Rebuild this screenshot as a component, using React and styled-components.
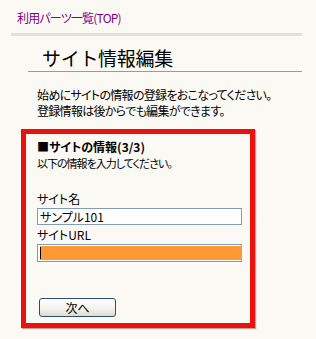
import React from "react";
import styled, { createGlobalStyle } from "styled-components";

const Global = createGlobalStyle`
  html, body { margin: 0; padding: 0; background: #fbf9f3; }
  body {
    font-family: "Noto Sans CJK JP", "Noto Sans", sans-serif;
    font-size: 12px;
    color: #000;
  }
`;

const Page = styled.div`
  width: 316px;
  height: 339px;
  padding-top: 10px;
  box-sizing: border-box;
  overflow: hidden;
`;

const TopLink = styled.a`
  display: block;
  margin-left: 17px;
  font-size: 12px;
  line-height: 16px;
  letter-spacing: -0.8px;
  color: #800080;
  text-decoration: none;
  font-feature-settings: "palt";
`;

const TopRule = styled.div`
  margin: 7px 14px 0 11px;
  height: 3px;
  background: #e2e0da;
`;

const TitleBar = styled.div`
  margin: 10px 14px 0 28px;
  border-bottom: 1px solid #9c9a94;
  padding: 0 0 1px 14px;
`;

const Title = styled.h1`
  margin: 0;
  font-size: 19px;
  line-height: 24px;
  font-weight: normal;
  letter-spacing: -0.3px;
`;

const Intro = styled.p`
  margin: 15px 0 0 37px;
  font-size: 12px;
  line-height: 16px;
  letter-spacing: -0.7px;
  font-feature-settings: "palt";
`;

const FormBox = styled.div`
  margin: 10px 0 0 21px;
  width: 234px;
  height: 199px;
  box-sizing: border-box;
  border: 5px solid #e8120f;
  box-shadow: 1px 1px 1px rgba(90, 0, 0, 0.35);
  padding: 4px 0 0 11px;
  display: flex;
  flex-direction: column;
  font-feature-settings: "palt";
`;

const BoxHeading = styled.div`
  font-weight: bold;
  line-height: 18px;
`;

const Line = styled.div`
  line-height: 15px;
  font-size: ${(p) => p.$size || 12}px;
  letter-spacing: ${(p) => p.$ls || 0}px;
  margin-top: ${(p) => p.$gap || 0}px;
`;

const Field = styled.div`
  margin-top: 2px;
  width: 205px;
  height: ${(p) => p.$h}px;
  box-sizing: border-box;
  border: 1px solid #7f9db9;
  background: #fff;
  padding: 0 2px;
  line-height: ${(p) => p.$h - 2}px;
  font-size: 12px;
  display: flex;
  align-items: center;
`;

const Selected = styled.div`
  position: relative;
  flex: 1;
  height: 14px;
  margin-right: -3px;
  background: #ff9933;
`;

const Caret = styled.span`
  position: absolute;
  left: 0;
  top: 1px;
  width: 1px;
  height: 12px;
  background: #000;
`;

const NextButton = styled.button`
  margin: 36px 0 0 2px;
  width: 77px;
  height: 19px;
  padding: 0;
  border: 1px solid #2b4e75;
  border-radius: 3px;
  background: linear-gradient(#ffffff, #f3f1ea 60%, #dedbce);
  font-family: inherit;
  font-size: 12px;
  line-height: 17px;
  color: #000;
`;

export default function App() {
  return (
    <>
      <Global />
      <Page>
        <TopLink href="#">利用パーツ一覧(TOP)</TopLink>
        <TopRule />
        <TitleBar>
          <Title>サイト情報編集</Title>
        </TitleBar>
        <Intro>
          始めにサイトの情報の登録をおこなってください。
          <br />
          登録情報は後からでも編集ができます。
        </Intro>
        <FormBox>
          <BoxHeading>■サイトの情報(3/3)</BoxHeading>
          <Line $size={11} $ls={-1}>以下の情報を入力してください。</Line>
          <Line $gap={20}>サイト名</Line>
          <Field $h={17}>サンプル101</Field>
          <Line $gap={2}>サイトURL</Line>
          <Field $h={18}>
            <Selected>
              <Caret />
            </Selected>
          </Field>
          <NextButton>次へ</NextButton>
        </FormBox>
      </Page>
    </>
  );
}
